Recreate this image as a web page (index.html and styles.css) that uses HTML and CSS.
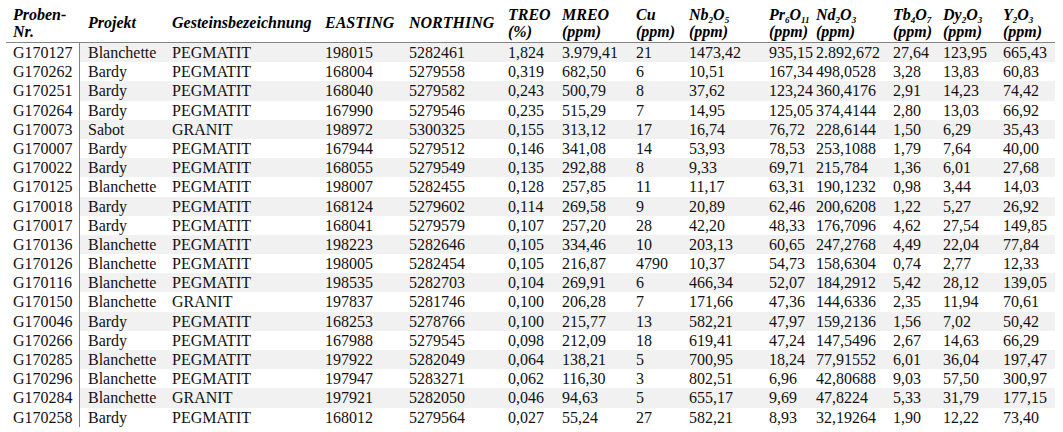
FILE: index.html
```html
<!DOCTYPE html>
<html lang="de">
<head>
<meta charset="utf-8">
<title>Proben</title>
<link rel="stylesheet" href="styles.css">
</head>
<body>
<div class="table">
  <div class="row head">
    <div class="c first">Proben-<br>Nr.</div>
    <div class="c">Projekt</div>
    <div class="c">Gesteinsbezeichnung</div>
    <div class="c">EASTING</div>
    <div class="c">NORTHING</div>
    <div class="c">TREO<br>(%)</div>
    <div class="c">MREO<br>(ppm)</div>
    <div class="c">Cu<br>(ppm)</div>
    <div class="c">Nb<sub>2</sub>O<sub>5</sub><br>(ppm)</div>
    <div class="c">Pr<sub>6</sub>O<sub>11</sub><br>(ppm)</div>
    <div class="c">Nd<sub>2</sub>O<sub>3</sub><br>(ppm)</div>
    <div class="c">Tb<sub>4</sub>O<sub>7</sub><br>(ppm)</div>
    <div class="c">Dy<sub>2</sub>O<sub>3</sub><br>(ppm)</div>
    <div class="c">Y<sub>2</sub>O<sub>3</sub><br>(ppm)</div>
  </div>
  <div id="body"></div>
</div>
<script src="app.js"></script>
</body>
</html>
```
FILE: app.js
```js
const data = `G170127 Blanchette PEGMATIT 198015 5282461 1,824 3.979,41 21 1473,42 935,15 2.892,672 27,64 123,95 665,43
G170262 Bardy PEGMATIT 168004 5279558 0,319 682,50 6 10,51 167,34 498,0528 3,28 13,83 60,83
G170251 Bardy PEGMATIT 168040 5279582 0,243 500,79 8 37,62 123,24 360,4176 2,91 14,23 74,42
G170264 Bardy PEGMATIT 167990 5279546 0,235 515,29 7 14,95 125,05 374,4144 2,80 13,03 66,92
G170073 Sabot GRANIT 198972 5300325 0,155 313,12 17 16,74 76,72 228,6144 1,50 6,29 35,43
G170007 Bardy PEGMATIT 167944 5279512 0,146 341,08 14 53,93 78,53 253,1088 1,79 7,64 40,00
G170022 Bardy PEGMATIT 168055 5279549 0,135 292,88 8 9,33 69,71 215,784 1,36 6,01 27,68
G170125 Blanchette PEGMATIT 198007 5282455 0,128 257,85 11 11,17 63,31 190,1232 0,98 3,44 14,03
G170018 Bardy PEGMATIT 168124 5279602 0,114 269,58 9 20,89 62,46 200,6208 1,22 5,27 26,92
G170017 Bardy PEGMATIT 168041 5279579 0,107 257,20 28 42,20 48,33 176,7096 4,62 27,54 149,85
G170136 Blanchette PEGMATIT 198223 5282646 0,105 334,46 10 203,13 60,65 247,2768 4,49 22,04 77,84
G170126 Blanchette PEGMATIT 198005 5282454 0,105 216,87 4790 10,37 54,73 158,6304 0,74 2,77 12,33
G170116 Blanchette PEGMATIT 198535 5282703 0,104 269,91 6 466,34 52,07 184,2912 5,42 28,12 139,05
G170150 Blanchette GRANIT 197837 5281746 0,100 206,28 7 171,66 47,36 144,6336 2,35 11,94 70,61
G170046 Bardy PEGMATIT 168253 5278766 0,100 215,77 13 582,21 47,97 159,2136 1,56 7,02 50,42
G170266 Bardy PEGMATIT 167988 5279545 0,098 212,09 18 619,41 47,24 147,5496 2,67 14,63 66,29
G170285 Blanchette PEGMATIT 197922 5282049 0,064 138,21 5 700,95 18,24 77,91552 6,01 36,04 197,47
G170296 Blanchette PEGMATIT 197947 5283271 0,062 116,30 3 802,51 6,96 42,80688 9,03 57,50 300,97
G170284 Blanchette GRANIT 197921 5282050 0,046 94,63 5 655,17 9,69 47,8224 5,33 31,79 177,15
G170258 Bardy PEGMATIT 168012 5279564 0,027 55,24 27 582,21 8,93 32,19264 1,90 12,22 73,40`;

const body = document.getElementById('body');
data.split('\n').forEach((line, i) => {
  const row = document.createElement('div');
  row.className = 'row data' + (i % 2 === 0 ? ' alt' : '');
  line.split(' ').forEach((v, j) => {
    const c = document.createElement('div');
    c.className = j === 0 ? 'c first' : 'c';
    c.textContent = v;
    row.appendChild(c);
  });
  body.appendChild(row);
});
```
FILE: styles.css
```css
html, body {
  margin: 0;
  padding: 0;
  background: #ffffff;
}
body {
  font-family: "Liberation Serif", "Times New Roman", serif;
  font-size: 16px;
  color: #111111;
}
.table {
  margin-left: 6px;
  width: 1049px;
}
.row {
  display: grid;
  grid-template-columns: 74px 84px 153px 84px 99px 54px 74px 53px 80px 47px 77px 50px 60px 60px;
}
.c {
  box-sizing: border-box;
  padding-left: 8px;
  white-space: nowrap;
}
.c.first {
  padding-left: 7px;
}
.head {
  height: 43px;
  border-bottom: 1px solid #858585;
  box-sizing: border-box;
  font-weight: bold;
  font-style: italic;
  color: #000;
  align-items: center;
  line-height: 17px;
}
.head .c {
  padding-top: 3px;
}
sub {
  font-size: 9px;
  line-height: 0;
  vertical-align: -3px;
}
#body {
  background: linear-gradient(to right, transparent 73px, #858585 73px, #858585 74px, transparent 74px);
}
.data {
  height: 19.2px;
  line-height: 19px;
}
.data.alt {
  background: #f1f1f1;
}
.data .c.first {
  background: #ffffff;
  border-right: 1px solid #858585;
}
```
